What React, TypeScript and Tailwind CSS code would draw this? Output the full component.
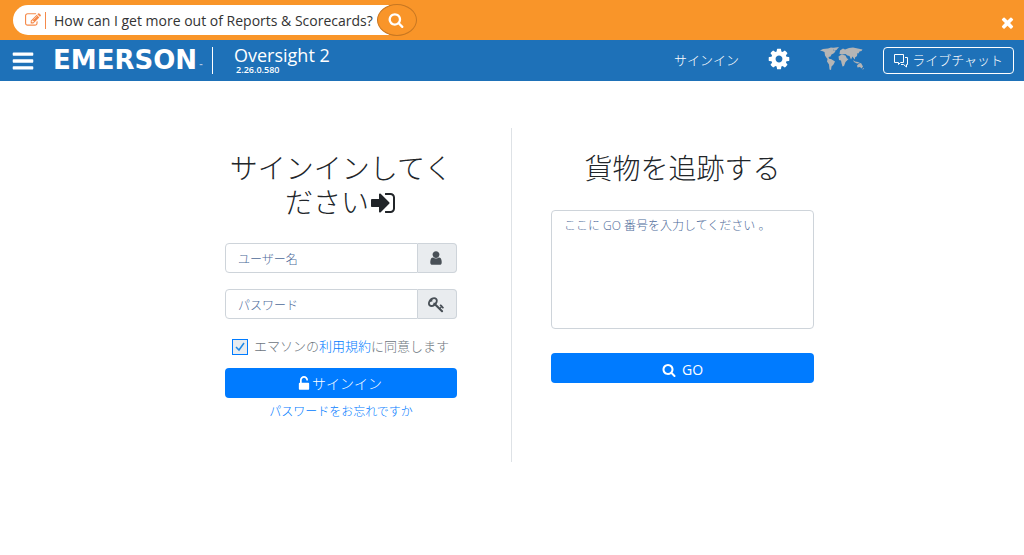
import type { ReactNode } from 'react';

const JP = "font-['Open_Sans','Noto_Sans_CJK_JP',sans-serif]";

const PATHS = {
  bars: 'M1664 1344v128q0 26-19 45t-45 19h-1408q-26 0-45-19t-19-45v-128q0-26 19-45t45-19h1408q26 0 45 19t19 45zm0-512v128q0 26-19 45t-45 19h-1408q-26 0-45-19t-19-45v-128q0-26 19-45t45-19h1408q26 0 45 19t19 45zm0-512v128q0 26-19 45t-45 19h-1408q-26 0-45-19t-19-45v-128q0-26 19-45t45-19h1408q26 0 45 19t19 45z',
  close: 'M1490 1322q0 40-28 68l-136 136q-28 28-68 28t-68-28l-294-294-294 294q-28 28-68 28t-68-28l-136-136q-28-28-28-68t28-68l294-294-294-294q-28-28-28-68t28-68l136-136q28-28 68-28t68 28l294 294 294-294q28-28 68-28t68 28l136 136q28 28 28 68t-28 68l-294 294 294 294q28 28 28 68z',
  cog: 'M1152 896q0-106-75-181t-181-75-181 75-75 181 75 181 181 75 181-75 75-181zm512-109v222q0 12-8 23t-20 13l-185 28q-19 54-39 91 35 50 107 138 10 12 10 25t-9 23q-27 37-99 108t-94 71q-12 0-26-9l-138-108q-44 23-91 38-16 136-29 186-7 28-36 28h-222q-14 0-24.500-8.500t-11.500-21.500l-28-184q-49-16-90-37l-141 107q-10 9-25 9-14 0-25-11-126-114-165-168-7-10-7-23 0-12 8-23 15-21 51-66.500t54-70.500q-27-50-41-99l-183-27q-13-2-21-12.500t-8-23.500v-222q0-12 8-23t19-13l186-28q14-46 39-92-40-57-107-138-10-12-10-24 0-10 9-23 26-36 98.500-107.500t94.500-71.500q13 0 26 10l138 107q44-23 91-38 16-136 29-186 7-28 36-28h222q14 0 24.500 8.500t11.500 21.500l28 184q49 16 90 37l142-107q9-9 24-9 13 0 25 10 129 119 165 170 7 8 7 22 0 12-8 23-15 21-51 66.500t-54 70.500q26 50 41 98l183 28q13 2 21 12.500t8 23.500z',
  search: 'M1216 832q0-185-131.500-316.500t-316.500-131.500-316.500 131.500-131.500 316.500 131.500 316.500 316.500 131.500 316.500-131.500 131.500-316.500zm512 832q0 52-38 90t-90 38q-54 0-90-38l-343-342q-179 124-399 124-143 0-273.500-55.500t-225-150-150-225-55.500-273.500 55.500-273.500 150-225 225-150 273.500-55.500 273.500 55.500 225 150 150 225 55.500 273.500q0 220-124 399l343 343q37 37 37 90z',
  user: 'M1536 1399q0 109-62.500 187t-150.500 78h-854q-88 0-150.500-78t-62.500-187q0-85 8.500-160.500t31.500-152 58.500-131 94-89 134.500-34.500q131 128 313 128t313-128q76 0 134.500 34.500t94 89 58.500 131 31.500 152 8.500 160.500zm-256-887q0 159-112.500 271.500t-271.500 112.500-271.500-112.500-112.500-271.500 112.500-271.500 271.500-112.500 271.500 112.500 112.500 271.500z',
  signIn: 'M1312 896q0 26-19 45l-544 544q-19 19-45 19t-45-19-19-45v-288h-448q-26 0-45-19t-19-45v-384q0-26 19-45t45-19h448v-288q0-26 19-45t45-19 45 19l544 544q19 19 19 45zm352-352v704q0 119-84.500 203.500t-203.500 84.500h-320q-13 0-22.500-9.500t-9.500-22.500q0-4-1-20t-.5-26.500 3-23.500 10-19.500 20.500-6.500h320q66 0 113-47t47-113v-704q0-66-47-113t-113-47h-312l-11.500-1-11.500-3-8-5.500-7-9-2-13.500q0-4-1-20t-.5-26.500 3-23.500 10-19.500 20.500-6.500h320q119 0 203.500 84.500t84.500 203.500z',
  edit: 'M888 1184l116-116-152-152-116 116v56h96v96h56zm440-720q-16-16-33 1l-350 350q-17 17-1 33t33-1l350-350q17-17 1-33zm80 594v190q0 119-84.500 203.500t-203.500 84.500h-832q-119 0-203.500-84.500t-84.500-203.500v-832q0-119 84.500-203.500t203.500-84.500h832q63 0 117 25 15 7 18 23 3 17-9 29l-49 49q-14 14-32 8-23-6-45-6h-832q-66 0-113 47t-47 113v832q0 66 47 113t113 47h832q66 0 113-47t47-113v-126q0-13 9-22l64-64q15-15 35-7t20 29zm-96-738l288 288-672 672h-288v-288zm444 132l-92 92-288-288 92-92q28-28 68-28t68 28l152 152q28 28 28 68t-28 68z',
  unlock: 'M1376 768q40 0 68 28t28 68v576q0 40-28 68t-68 28h-960q-40 0-68-28t-28-68v-576q0-40 28-68t68-28h32v-320q0-185 131.500-316.500t316.500-131.500 316.500 131.500 131.500 316.500q0 26-19 45t-45 19h-64q-26 0-45-19t-19-45q0-106-75-181t-181-75-181 75-75 181v320h736z',
  key: 'M832 512q0-80-56-136t-136-56-136 56-56 136q0 42 19 83-41-19-83-19-80 0-136 56t-56 136 56 136 136 56 136-56 56-136q0-42-19-83 41 19 83 19 80 0 136-56t56-136zm851 704q0 17-49 66t-66 49q-9 0-28.500-16t-36.500-33-38.500-40-24.500-26l-96 96 220 220q28 28 28 68 0 42-39 81t-81 39q-40 0-68-28l-671-671q-176 131-365 131-163 0-265.500-102.500t-102.500-265.500q0-160 95-313t248-248 313-95q163 0 265.500 102.500t102.500 265.500q0 189-131 365l355 355 96-96q-3-3-26-24.500t-40-38.500-33-36.500-16-28.500q0-17 49-66t66-49q13 0 23 10 6 6 46 44.500t82 79.500 86.500 86 73 78 28.500 41z',
};

function Icon({ name, className }: { name: keyof typeof PATHS; className: string }) {
  return (
    <svg viewBox="0 0 1792 1792" className={className} fill="currentColor" aria-hidden="true">
      <path d={PATHS[name]} />
    </svg>
  );
}

function WorldMap() {
  return (
    <svg viewBox="0 0 44 24" className="-mt-1 h-6 w-11" fill="#b5b5b5" aria-hidden="true">
      <path d="M0 3.500 3 2l5-.5 3-1 3 .5-1 2 2.500 1.500-2 2-2 1-1 2-2 .5.500 1.500 2 1.500-1 .5-3-2-2-3-.5-3.500L2 4z" />
      <path d="M12 1l7-1-2.500 3-2 1z" />
      <path d="M7.500 12 11 12l4 2.500-1.500 3-2 2-.5 3.500-1.500-.5-.5-5-2-3z" />
      <path d="M19.500 7l.5-3.500 3-2 2 1 4-1.500 4-.5 9.500 2-1 1.500-2 .5-1 2-1-.5-.5 3-2 1.500 0 2-1.500-1.500-1-1.500-1.500 3-1.500-3.500-2-.5-2-1.500-3 .5z" />
      <path d="M18.500 9.500l3-2 4 1 1.500 3 1.500.5-3 3-1.500 4-1.500.5-1-3.500-.5-2.500-2-.5z" />
      <path d="M33 13l2 1.500 3 .5 2 1-3 .5-3-1.500z" />
      <path d="M37 18.500l2-2 2-.5 2 3.500-1.500 2-1.500-1.500-2.500.500z" />
      <path d="M43 21l1 .5-1.500 1.500z" />
    </svg>
  );
}

function ChatIcon() {
  return (
    <svg viewBox="0 0 14 14" className="size-3.5" fill="none" stroke="currentColor" aria-hidden="true">
      <path d="M.5.5h9v8h-3l-2 2v-2h-4z" />
      <path d="M11 3.500h2.500v7h-1v2.500l-3-2.500h-2.500" />
    </svg>
  );
}

function Field({ id, label, type, icon }: { id: string; label: string; type: string; icon: ReactNode }) {
  return (
    <div className="mb-4 flex h-[30px]">
      <input
        id={id}
        type={type}
        aria-label={label}
        placeholder={label}
        className="min-w-0 flex-1 rounded-l border border-[#ced4da] px-3 pt-1 text-xs outline-none placeholder:text-[#4d6a99]"
      />
      <label
        htmlFor={id}
        className="flex w-[39px] items-center justify-center rounded-r border border-l-0 border-[#ced4da] bg-[#e9ecef] pr-0.5 text-[#495057]"
      >
        {icon}
      </label>
    </div>
  );
}

export default function App() {
  return (
    <div className={`${JP} font-light text-[#212529]`}>
      <div className="flex h-10 items-center justify-between bg-[#f99529] pr-2 pl-[13px] font-normal">
        <form className="flex h-[30px] items-center rounded-l-full bg-white pl-3" onSubmit={(e) => e.preventDefault()}>
          <Icon name="edit" className="size-4 text-[#f58a4b]" />
          <span className="ml-1 h-[17px] w-px bg-[#f58a4b]" />
          <span className="ml-2 pt-0.5 text-sm whitespace-nowrap text-[#333]">How can I get more out of Reports &amp; Scorecards?</span>
          <button
            aria-label="Search"
            className="-mr-7 ml-1 flex h-8 w-10 items-center justify-center rounded-[50%] border border-[#c77722] bg-[#f99529] pr-0.5 text-white"
          >
            <Icon name="search" className="size-4" />
          </button>
        </form>
        <button aria-label="Close" className="mt-1 text-white">
          <Icon name="close" className="size-[17px]" />
        </button>
      </div>

      <header className="flex h-[41px] items-center bg-[#1e71b8] pr-2.5 pl-[11px] text-white">
        <button aria-label="Menu">
          <Icon name="bars" className="size-6" />
        </button>
        <a href="#home" className="ml-[18px] flex items-end pb-0.5 font-['DejaVu_Sans',sans-serif] text-[26px] leading-7 font-bold">
          EMERSON<span className="ml-0.5 text-[4px] leading-4">™</span>
        </a>
        <span className="ml-[9px] h-[27px] w-px bg-white" />
        <div className="ml-[21px] font-normal">
          <div className="text-lg leading-[18px]">Oversight 2</div>
          <div className="ml-0.5 text-[9px] leading-3 font-semibold">2.26.0.580</div>
        </div>
        <nav className="ml-auto flex items-center">
          <a href="#signin" className="text-[13px]">サインイン</a>
          <button aria-label="Settings" className="ml-7">
            <Icon name="cog" className="-mt-1 size-6" />
          </button>
          <button aria-label="Language" className="ml-[29px]">
            <WorldMap />
          </button>
          <button className="ml-[19px] flex h-[27px] items-center gap-1 rounded border border-white px-2.5 text-[13px]">
            <ChatIcon />
            ライブチャット
          </button>
        </nav>
      </header>

      <main className="mx-auto grid max-w-[654px] grid-cols-2 pt-[47px]">
        <form className="border-r border-[#dee2e6] pt-[23px] pr-[54px] pb-10 pl-10" onSubmit={(e) => e.preventDefault()}>
          <h1 className="mb-6 text-center text-[28px] leading-[34px]">
            サインインしてください
            <Icon name="signIn" className="-mt-1.5 inline size-7" />
          </h1>
          <Field id="username" type="text" label="ユーザー名" icon={<Icon name="user" className="size-4" />} />
          <Field id="password" type="password" label="パスワード" icon={<Icon name="key" className="size-[17px]" />} />
          <div className="flex h-6 items-center pl-[7px] text-[13px] text-[#6c757d]">
            <span className="relative flex size-4">
              <input
                id="terms"
                type="checkbox"
                defaultChecked
                className="peer size-4 appearance-none border border-[#007bff] bg-[#e9ecef]"
              />
              <svg viewBox="0 0 16 16" className="pointer-events-none absolute inset-0 hidden size-4 peer-checked:block" fill="none" stroke="#1e88e5" strokeWidth="1.500" aria-hidden="true">
                <path d="M4 8l3 3 5-7" />
              </svg>
            </span>
            <label htmlFor="terms" className="ml-1.5 whitespace-nowrap">
              エマソンの<a href="#terms-of-use" className="text-[#007bff]">利用規約</a>に同意します
            </label>
          </div>
          <button className="mt-[9px] flex h-[30px] w-full items-center justify-center rounded bg-[#007bff] pt-0.5 pr-1 text-sm text-white">
            <Icon name="unlock" className="size-4" />
            サインイン
          </button>
          <a href="#forgot" className="mt-1 block text-center text-xs leading-5 text-[#007bff]">
            パスワードをお忘れですか
          </a>
        </form>

        <form className="pt-[23px] pr-[25px] pl-[39px]" onSubmit={(e) => e.preventDefault()}>
          <h2 className="mb-[25px] text-center text-[28px] leading-[34px]">貨物を追跡する</h2>
          <textarea
            aria-label="GO 番号"
            placeholder="ここに GO 番号を入力してください 。"
            className="block h-[119px] w-full resize-none rounded border border-[#ced4da] px-3 py-[7px] text-xs outline-none placeholder:text-[#4d6a99]"
          />
          <button className="mt-6 flex h-[30px] w-full items-center justify-center gap-1.5 rounded bg-[#007bff] pt-[3px] text-sm font-normal text-white">
            <Icon name="search" className="size-3.5" />
            GO
          </button>
        </form>
      </main>
    </div>
  );
}
